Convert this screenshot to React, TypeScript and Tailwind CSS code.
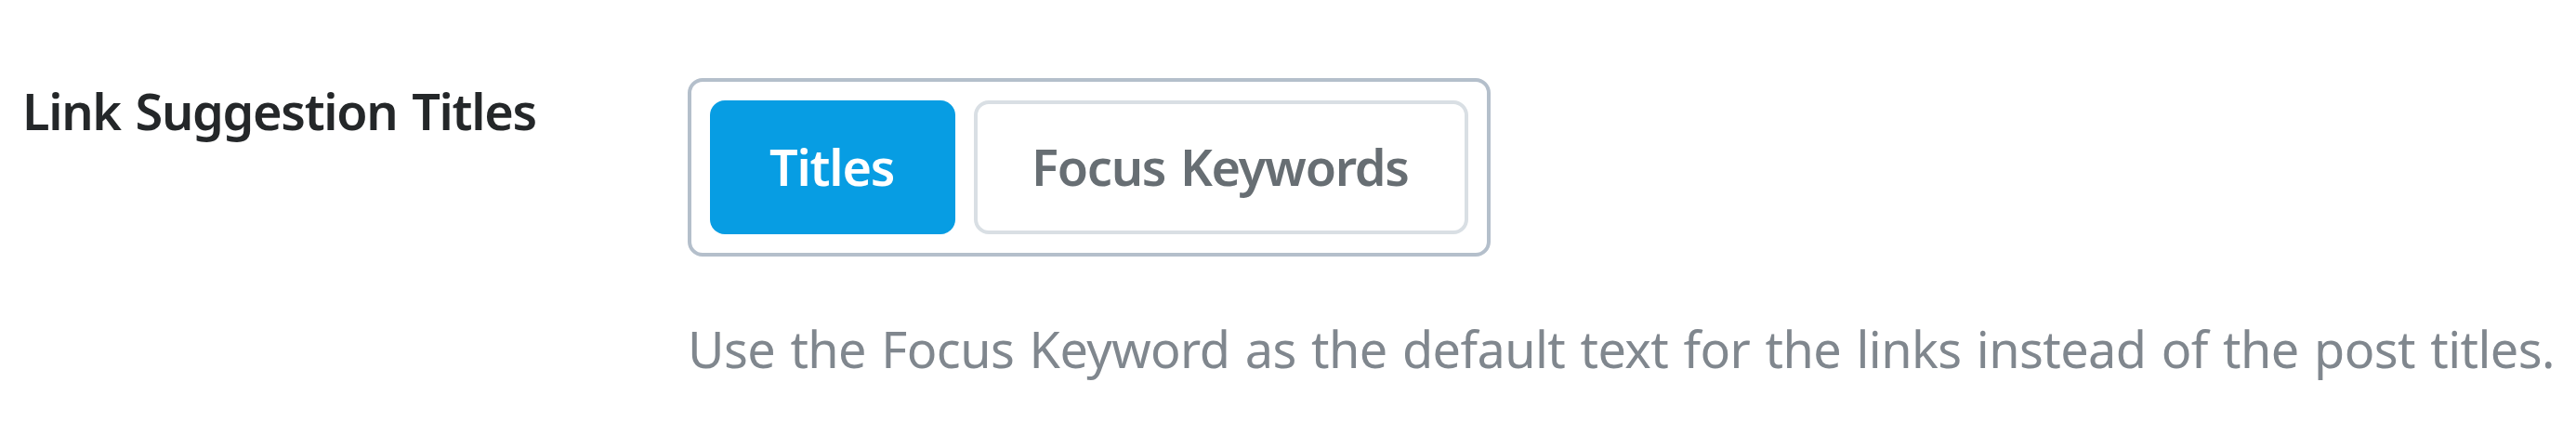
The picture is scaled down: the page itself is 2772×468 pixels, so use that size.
export default function App() {
  return (
    <main className="flex h-[468px] w-full bg-white font-['Noto_Sans','Open_Sans',sans-serif] text-[54px] leading-[74px]">
      <div className="w-[740px] shrink-0 pl-[24px] pt-[82px]">
        <h2 className="whitespace-nowrap font-semibold tracking-[-1.3px] text-[#242729] [word-spacing:3px]">Link Suggestion Titles</h2>
      </div>
      <div className="pt-[84px]">
        <div className="flex h-[192px] w-[864px] gap-5 rounded-[16px] border-4 border-[#b4bfcb] p-5">
          <button className="w-[264px] rounded-2xl bg-[#079de3] pb-[2px] pl-16 text-left font-semibold tracking-[-1.2px] text-white">Titles</button>
          <button className="flex-1 whitespace-nowrap rounded-2xl border-4 border-[#d9dfe4] pb-[2px] pl-[58px] text-left font-semibold tracking-[-1.28px] text-[#676e73] [word-spacing:3px]">Focus Keywords</button>
        </div>
        <p className="mt-[62px] whitespace-nowrap tracking-[-0.58px] text-[#80878e] [word-spacing:2.86px]">Use the Focus Keyword as the default text for the links instead of the post titles.</p>
      </div>
    </main>
  );
}
